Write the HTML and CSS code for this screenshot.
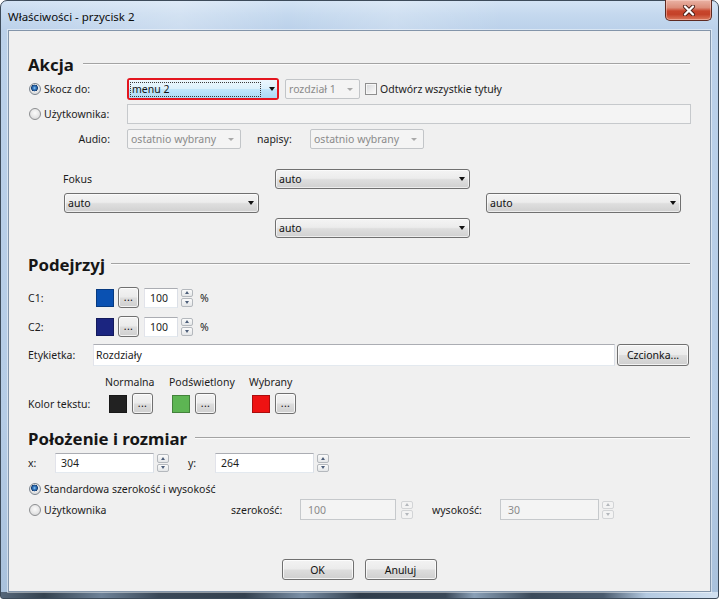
FILE: index.html
```html
<!DOCTYPE html>
<html lang="pl">
<head>
<meta charset="utf-8">
<title>Właściwości - przycisk 2</title>
<link rel="stylesheet" href="styles.css">
</head>
<body>
<div class="window">
  <div class="titlebar">
    <span class="title">Właściwości - przycisk 2</span>
    <div class="close">
      <svg width="14" height="11" viewBox="0 0 14 11"><path d="M3 1.5 L11 9.5 M11 1.5 L3 9.5" stroke="#4a1d15" stroke-width="4" stroke-linecap="round"/><path d="M3 1.5 L11 9.5 M11 1.5 L3 9.5" stroke="#fff" stroke-width="2.3" stroke-linecap="round"/></svg>
    </div>
  </div>
  <div class="client">
    <div class="gh"><h2>Akcja</h2><span class="rule"></span></div>

    <div class="row r-skocz">
      <label class="lbl w-lead"><span class="rb on"></span>Skocz do:</label>
      <div class="focusring"><div class="sel"><span class="fr">menu 2</span><span class="arr"></span></div></div>
      <div class="combo dis w-rozdz"><span>rozdział 1</span><span class="arr"></span></div>
      <span class="cb"></span><span class="cb-text">Odtwórz wszystkie tytuły</span>
    </div>

    <div class="row r-user">
      <label class="lbl w-lead"><span class="rb"></span>Użytkownika:</label>
      <div class="input dis grow"></div>
    </div>

    <div class="row r-audio">
      <span class="lbl w-lead right">Audio:</span>
      <div class="combo dis w-audio"><span>ostatnio wybrany</span><span class="arr"></span></div>
      <span class="lbl w-napisy">napisy:</span>
      <div class="combo dis w-audio"><span>ostatnio wybrany</span><span class="arr"></span></div>
    </div>

    <div class="fokus">
      <span class="f-lab">Fokus</span>
      <div class="combo f-top"><span>auto</span><span class="arr"></span></div>
      <div class="combo f-left"><span>auto</span><span class="arr"></span></div>
      <div class="combo f-right"><span>auto</span><span class="arr"></span></div>
      <div class="combo f-bot"><span>auto</span><span class="arr"></span></div>
    </div>

    <div class="gh gh-podejrzyj"><h2>Podejrzyj</h2><span class="rule"></span></div>

    <div class="row r-c1">
      <span class="lbl w-c">C1:</span>
      <span class="sw sw-c1"></span>
      <span class="btn dots">...</span>
      <div class="input w-pct">100</div>
      <div class="spin"><span class="sb"><i class="up"></i></span><span class="sb"><i class="dn"></i></span></div>
      <span class="pct">%</span>
    </div>

    <div class="row r-c2">
      <span class="lbl w-c">C2:</span>
      <span class="sw sw-c2"></span>
      <span class="btn dots">...</span>
      <div class="input w-pct">100</div>
      <div class="spin"><span class="sb"><i class="up"></i></span><span class="sb"><i class="dn"></i></span></div>
      <span class="pct">%</span>
    </div>

    <div class="row r-etyk">
      <span class="lbl w-etyk">Etykietka:</span>
      <div class="input grow etyk-in">Rozdziały</div>
      <span class="btn w-font">Czcionka...</span>
    </div>

    <div class="row r-heads">
      <span class="w-heads-lead"></span>
      <span class="head h1">Normalna</span>
      <span class="head h2c">Podświetlony</span>
      <span class="head">Wybrany</span>
    </div>

    <div class="row r-kolor">
      <span class="lbl w-kolor">Kolor tekstu:</span>
      <span class="sw sw-black"></span>
      <span class="btn dots">...</span>
      <span class="sw sw-green g2"></span>
      <span class="btn dots">...</span>
      <span class="sw sw-red g3"></span>
      <span class="btn dots">...</span>
    </div>

    <div class="gh gh-pol"><h2>Położenie i rozmiar</h2><span class="rule"></span></div>

    <div class="row r-xy">
      <span class="lbl w-xy">x:</span>
      <div class="input w-coord">304</div>
      <div class="spin"><span class="sb"><i class="up"></i></span><span class="sb"><i class="dn"></i></span></div>
      <span class="lbl w-xy y-lbl">y:</span>
      <div class="input w-coord">264</div>
      <div class="spin"><span class="sb"><i class="up"></i></span><span class="sb"><i class="dn"></i></span></div>
    </div>

    <div class="row r-std">
      <label class="lbl"><span class="rb on"></span>Standardowa szerokość i wysokość</label>
    </div>

    <div class="row r-user2">
      <label class="lbl w-user2"><span class="rb"></span>Użytkownika</label>
      <span class="lbl w-szer">szerokość:</span>
      <div class="input dis w-szer-in">100</div>
      <div class="spin dis"><span class="sb"><i class="up"></i></span><span class="sb"><i class="dn"></i></span></div>
      <span class="lbl w-wys">wysokość:</span>
      <div class="input dis w-coord">30</div>
      <div class="spin dis"><span class="sb"><i class="up"></i></span><span class="sb"><i class="dn"></i></span></div>
    </div>

    <div class="row actions">
      <span class="btn w-action">OK</span>
      <span class="btn w-action">Anuluj</span>
    </div>
  </div>
</div>
</body>
</html>
```

FILE: styles.css
```css
* { box-sizing: border-box; }

body {
  margin: 0;
  font-family: "Noto Sans", "Open Sans", sans-serif;
  font-size: 10.5px;
  color: #1c1c1c;
  background: #ffffff;
}

/* ---------- window frame ---------- */
.window {
  width: 719px;
  height: 599px;
  border: 1px solid #3d4b5a;
  border-radius: 7px 7px 3px 3px;
  padding: 0 7px 6px 7px;
  display: flex;
  flex-direction: column;
  background:
    linear-gradient(90deg, #56677a 0, #34424f 6%, #6e8298 14%, #3a4857 22%, #34414f 34%, #7b90a7 42%, #2f3c4a 50%, #3a4858 62%, #8aa0b7 66%, #3b4a5a 74%, #4a5b6e 84%, #b3c9e0 90%, #d2e1f1 100%) left bottom / 100% 6px no-repeat,
    linear-gradient(90deg, rgba(255,255,255,0) 0, rgba(255,255,255,0.25) 25%, rgba(255,255,255,0) 40%, rgba(255,255,255,0.2) 55%, rgba(255,255,255,0) 70%) left top / 100% 29px no-repeat,
    linear-gradient(180deg, #d3e3f4 0, #c4d8ee 14px, #bbd1ea 29px, #b5cce6 70%, #a9c1dc 100%);
}

.titlebar {
  height: 29px;
  display: flex;
  align-items: center;
  flex: none;
}

.title {
  font-size: 11.5px;
  color: #0c0c0c;
  padding-left: 0;
  margin-top: 1px;
}

.close {
  margin-left: auto;
  margin-right: -1px;
  align-self: flex-start;
  margin-top: -1px;
  width: 47px;
  height: 21px;
  border: 1px solid #5e2a21;
  border-top: none;
  border-radius: 0 0 5px 5px;
  background: linear-gradient(180deg, #eab3a5 0%, #dc8e7b 38%, #c8452c 55%, #c44128 72%, #dc7a5e 100%);
  box-shadow: inset 0 0 0 1px rgba(255, 220, 210, 0.45);
  display: flex;
  align-items: center;
  justify-content: center;
}

.client {
  flex: 1;
  border: 1px solid #8395aa;
  box-shadow: 0 0 0 1px rgba(255, 255, 255, 0.45);
  background: #f0f0f0;
  padding: 23px 20px 0 19px;
}

/* ---------- group headers ---------- */
.gh {
  display: flex;
  height: 22px;
}

.gh h2 {
  margin: 0;
  font-size: 16.8px;
  font-weight: 700;
  line-height: 22px;
  color: #161616;
  white-space: nowrap;
}

.gh .rule {
  flex: 1;
  height: 1px;
  margin-top: 9px;
  margin-left: 9px;
  background: #a3a3a3;
  box-shadow: 0 1px 0 #fbfbfb;
}

.gh-podejrzyj { margin-top: 16px; }
.gh-podejrzyj .rule { margin-left: 6px; }
.gh-pol { margin-top: 14px; }
.gh-pol .rule { margin-left: 8px; }

/* ---------- rows ---------- */
.row {
  display: flex;
  align-items: center;
}

.lbl {
  display: flex;
  align-items: center;
  white-space: nowrap;
  flex: none;
}

.right { justify-content: flex-end; padding-right: 17px; }

.grow { flex: 1; }

.w-lead { width: 99px; }

.r-skocz { height: 22px; margin-top: 2px; }
.r-user { height: 20px; margin-top: 4px; }
.r-audio { height: 20px; margin-top: 5px; }

/* radio / checkbox */
.rb {
  width: 12px;
  height: 12px;
  border-radius: 50%;
  border: 1px solid #8c8e90;
  margin-left: 1px;
  margin-right: 3px;
  flex: none;
  background: radial-gradient(circle at 50% 40%, #fbfbfb 0, #eaeaea 45%, #cfd0d2 100%);
}

.rb.on {
  border-color: #7c8690;
  background:
    radial-gradient(circle at 45% 40%, #9fd0f7 0, #3d83c8 1.3px, #1b4f8f 2.8px, #123a6c 3.2px, rgba(0,0,0,0) 3.6px),
    radial-gradient(circle at 50% 40%, #fbfbfb 0, #e6e6e6 50%, #cfd0d2 100%);
}

.cb {
  width: 12px;
  height: 12px;
  margin-left: 5px;
  border: 1px solid #8f8f8f;
  flex: none;
  background: linear-gradient(135deg, #d5d7da 0%, #eeeeee 60%, #fbfbfb 100%);
  box-shadow: inset 0 0 0 1px #f6f6f6;
}

.cb-text { margin-left: 3px; white-space: nowrap; }

/* combos */
.focusring {
  width: 152px;
  height: 22px;
  border: 2px solid #e3161f;
  border-radius: 3px;
  flex: none;
}

.sel {
  height: 18px;
  display: flex;
  align-items: center;
  padding: 0 1px 0 1px;
  background: linear-gradient(180deg, #ecf7fd 0%, #dcf1fc 48%, #c1e6fb 52%, #acdaf4 100%);
}

.fr {
  width: 131px;
  height: 15px;
  border: 1px dotted #3a3a3a;
  line-height: 12px;
  padding-left: 1px;
  color: #111;
}

.sel .arr {
  margin-left: auto;
  margin-right: 1px;
  border-left: 3.5px solid transparent;
  border-right: 3.5px solid transparent;
  border-top: 4px solid #101010;
}

.combo {
  display: flex;
  align-items: center;
  height: 20px;
  border: 1px solid #707070;
  border-radius: 3px;
  padding: 0 4px 0 3px;
  background: linear-gradient(180deg, #f4f4f4 0%, #ececec 46%, #dedede 54%, #d0d0d0 100%);
  box-shadow: inset 0 0 0 1px rgba(255, 255, 255, 0.6);
  white-space: nowrap;
  flex: none;
  color: #111;
}

.combo .arr {
  margin-left: auto;
  border-left: 3.5px solid transparent;
  border-right: 3.5px solid transparent;
  border-top: 4px solid #111;
}

.combo.dis {
  border-color: #c2c5c8;
  border-radius: 2px;
  background: #f4f4f4;
  box-shadow: none;
  color: #8a8a8a;
  padding-right: 6px;
}

.combo.dis .arr {
  border-left-width: 3px;
  border-right-width: 3px;
  border-top: 3.5px solid #a9a9a9;
}

.w-rozdz { width: 75px; height: 20px; margin-left: 6px; }
.w-audio { width: 114px; }
.w-napisy { width: 53px; margin-left: 16px; }

/* text inputs */
.input {
  height: 20px;
  border: 1px solid;
  border-color: #abadb3 #dbdfe6 #e3e9ef #e2e3ea;
  background: #ffffff;
  padding: 0 4px 0 5px;
  display: flex;
  align-items: center;
  flex: none;
  white-space: nowrap;
}

.input.grow { flex: 1; }

.input.dis {
  background: #f4f4f4;
  border-color: #c6c9cc;
  color: #8a8a8a;
  padding-left: 7px;
}

.r-user .input { margin-right: -1px; }

/* fokus grid */
.fokus {
  display: grid;
  grid-template-columns: 195px 195px 195px;
  grid-template-rows: 24px 25px 20px;
  column-gap: 16px;
  margin: 20px 0 0 36px;
}

.fokus .combo { align-self: start; }

.f-lab { grid-area: 1 / 1; line-height: 20px; margin-left: -1px; }
.f-top { grid-area: 1 / 2; }
.f-left { grid-area: 2 / 1; }
.f-right { grid-area: 2 / 3; }
.f-bot { grid-area: 3 / 2; }

/* preview section */
.r-c1 { height: 21px; margin-top: 11px; }
.r-c2 { height: 21px; margin-top: 8px; }

.w-c { width: 68px; }

.sw {
  width: 18px;
  height: 18px;
  flex: none;
  border: 1px solid rgba(0, 0, 0, 0.28);
}

.sw-c1 { background: #0a51b2; }
.sw-c2 { background: #1b2580; }
.sw-black { background: #222222; }
.sw-green { background: #5db553; }
.sw-red { background: #ee1212; }

.btn {
  height: 21px;
  border: 1px solid #707070;
  border-radius: 3px;
  background: linear-gradient(180deg, #f3f3f3 0%, #ebebeb 48%, #dddddd 52%, #cfcfcf 100%);
  box-shadow: inset 0 0 0 1px rgba(255, 255, 255, 0.75);
  display: flex;
  align-items: center;
  justify-content: center;
  flex: none;
  white-space: nowrap;
  color: #111;
}

.dots {
  width: 21px;
  margin-left: 5px;
  letter-spacing: 0.3px;
  padding-bottom: 1px;
}

.r-c1 .dots, .r-c2 .dots { margin-left: 4px; }

.w-pct { width: 34px; margin-left: 5px; }

.spin {
  width: 12px;
  height: 18px;
  margin-left: 3px;
  display: flex;
  flex-direction: column;
  gap: 1px;
  flex: none;
}

.sb {
  flex: 1;
  border: 1px solid #b4b8bd;
  border-radius: 2px;
  background: linear-gradient(180deg, #fbfbfb, #e4e6e8);
  display: flex;
  align-items: center;
  justify-content: center;
}

.sb i {
  width: 0;
  height: 0;
  border-left: 2.5px solid transparent;
  border-right: 2.5px solid transparent;
}

.sb .up { border-bottom: 3px solid #4e5f7a; }
.sb .dn { border-top: 3px solid #4e5f7a; }

.spin.dis .sb { border-color: #d2d4d6; background: #f3f3f3; }
.spin.dis .up { border-bottom-color: #b3b7bc; }
.spin.dis .dn { border-top-color: #b3b7bc; }

.pct { margin-left: 7px; }

.r-etyk { height: 22px; margin-top: 7px; }
.w-etyk { width: 65px; }
.etyk-in { height: 22px; padding-left: 2px; }
.w-font { width: 72px; height: 22px; margin-left: 2px; margin-right: 1px; }

.r-heads { height: 16px; margin-top: 8px; }
.w-heads-lead { width: 77px; flex: none; }
.head { white-space: nowrap; flex: none; }
.h1 { width: 64px; }
.h2c { width: 80px; }

.r-kolor { height: 21px; margin-top: 3px; }
.w-kolor { width: 81px; }
.g2 { margin-left: 19px; }
.g3 { margin-left: 36px; }

/* position section */
.r-xy { height: 20px; margin-top: 3px; }
.w-xy { width: 27px; }
.y-lbl { margin-left: 19px; }
.w-coord { width: 99px; }

.r-std { height: 16px; margin-top: 8px; }
.r-user2 { height: 21px; margin-top: 2px; }
.r-user2 .input { height: 21px; }
.w-user2 { width: 203px; }
.w-szer { width: 69px; }
.w-szer-in { width: 96px; }
.r-user2 .spin { margin-left: 5px; }
.w-wys { width: 68px; margin-left: 19px; }
.r-user2 .spin:last-child { margin-left: 3px; }

.actions {
  justify-content: center;
  gap: 11px;
  margin-top: 39px;
}

.w-action { width: 72px; }
```
